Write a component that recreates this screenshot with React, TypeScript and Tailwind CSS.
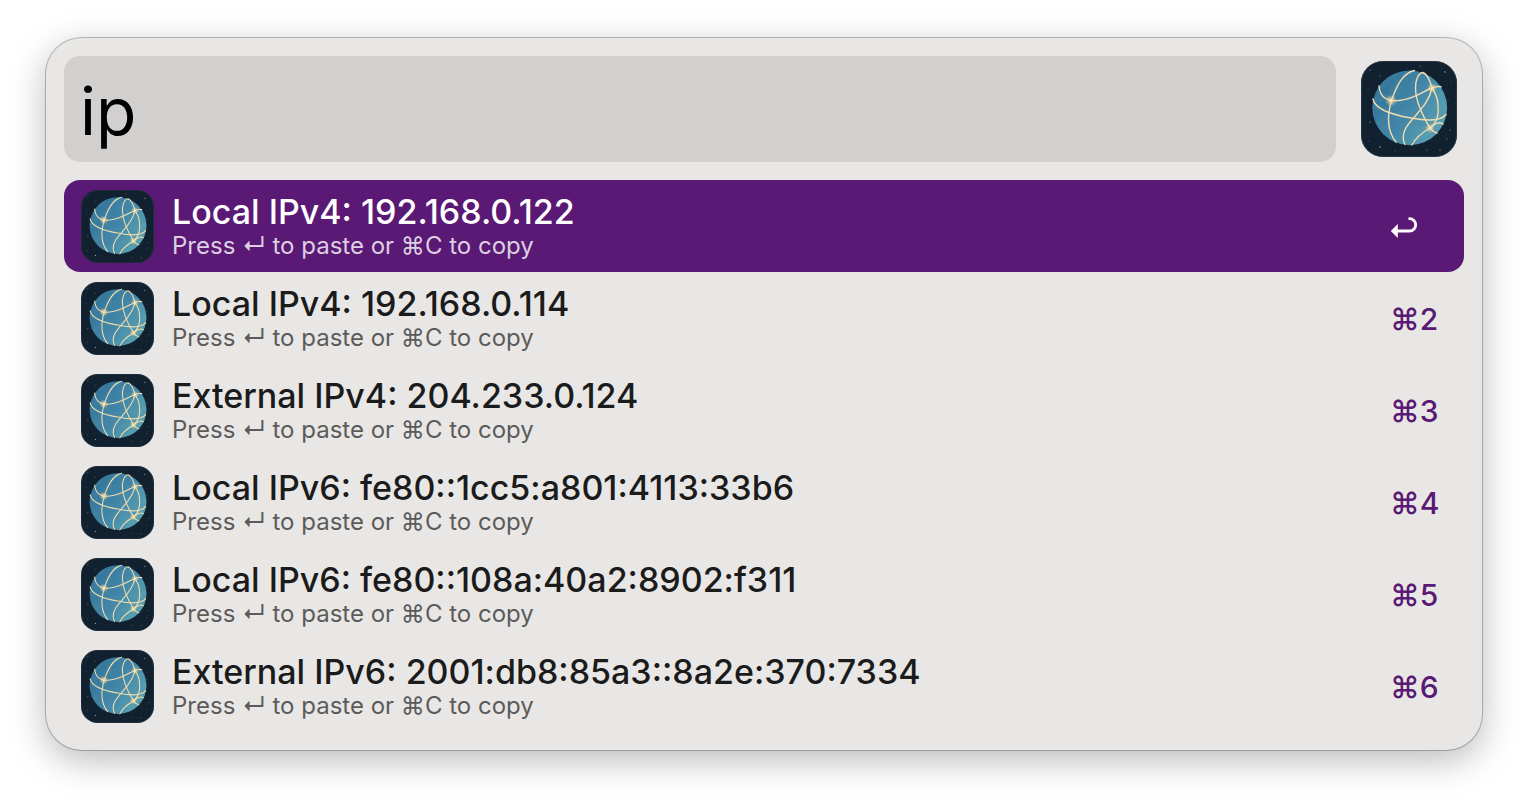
import { useState } from "react";

type Result = { title: string; shortcut: string };

const results: Result[] = [
  { title: "Local IPv4: 192.168.0.122", shortcut: "" },
  { title: "Local IPv4: 192.168.0.114", shortcut: "⌘2" },
  { title: "External IPv4: 204.233.0.124", shortcut: "⌘3" },
  { title: "Local IPv6: fe80::1cc5:a801:4113:33b6", shortcut: "⌘4" },
  { title: "Local IPv6: fe80::108a:40a2:8902:f311", shortcut: "⌘5" },
  { title: "External IPv6: 2001:db8:85a3::8a2e:370:7334", shortcut: "⌘6" },
];

const stars: [number, number, number][] = [
  [9, 9, 0.6], [19, 15, 0.5], [84, 11, 0.8], [59, 5, 0.5], [90, 21, 0.4], [7, 28, 0.4],
  [9, 61, 0.6], [19, 86, 0.8], [8, 80, 0.4], [66, 89, 0.5], [79, 89, 0.6], [86, 78, 0.5],
  [89, 69, 0.5], [87, 39, 0.4], [34, 90, 0.4],
];

// Night-sky tile with a globe wrapped in glowing orbits.
function GlobeIcon({ id, className }: { id: string; className: string }) {
  return (
    <svg viewBox="0 0 96 96" className={className} aria-hidden="true">
      <defs>
        <linearGradient id={`${id}-globe`} x1="0.1" y1="0.2" x2="0.95" y2="0.7">
          <stop offset="0" stopColor="#33759a" />
          <stop offset="0.5" stopColor="#4186a8" />
          <stop offset="1" stopColor="#5ba4b4" />
        </linearGradient>
        <radialGradient id={`${id}-glow`}>
          <stop offset="0" stopColor="#fff6cf" />
          <stop offset="0.3" stopColor="#f6dfa3" stopOpacity="0.75" />
          <stop offset="1" stopColor="#f0d596" stopOpacity="0" />
        </radialGradient>
        <filter id={`${id}-grain`} x="0" y="0" width="100%" height="100%">
          <feTurbulence type="fractalNoise" baseFrequency="0.12" numOctaves="3" seed="4" />
          <feColorMatrix values="0 0 0 0 0.08  0 0 0 0 0.25  0 0 0 0 0.38  2.4 0 0 0 -1" />
          <feComposite in2="SourceGraphic" operator="in" />
        </filter>
      </defs>
      <rect width="96" height="96" rx="22" fill="#12212f" />
      <rect x="0.5" y="0.5" width="95" height="95" rx="21.5" fill="none" stroke="#33404c" strokeOpacity="0.6" />
      {stars.map(([x, y, r]) => (
        <circle key={`${x}-${y}`} cx={x} cy={y} r={r} fill="#a9a28c" />
      ))}
      <circle cx="48.7" cy="46.8" r="37.4" fill={`url(#${id}-globe)`} />
      <circle cx="48.7" cy="46.8" r="37.4" fill="#000" filter={`url(#${id}-grain)`} opacity="0.45" />
      <g fill="none" stroke="#f0dcae" strokeWidth="1.4" strokeLinecap="round">
        <path d="M18 25C19 38 28 40.5 38 39.5C54 38 62 30 71 27Q76 25 80 25.8" />
        <path d="M53.5 9.5C42 12 36 24 31 38C26 54 26 70 35 81" />
        <path d="M12 38C14 48 32 54 50 57C66 60 80 60 85 53.5" />
        <path d="M71 27C68.5 18 66 13 62 11.5C57 12 54 20 54.5 28C55 43 63 57 69 67Q72 71 76 72" />
        <path d="M71 27C75 33 77 38 77 44C78 53 77 60 69 67" />
        <path d="M71 27C68 42 57 51 50 60C43 68 40 76 44 83.5" />
        <path d="M51 84C55 76 62 71 69 67C74 63 78 60 82 63" />
      </g>
      <circle cx="30" cy="39.5" r="6" fill={`url(#${id}-glow)`} />
      <circle cx="71" cy="27" r="5" fill={`url(#${id}-glow)`} />
      <circle cx="69" cy="67" r="5" fill={`url(#${id}-glow)`} />
    </svg>
  );
}

function ReturnIcon() {
  return (
    <svg viewBox="0 0 28 24" className="h-6 w-7" role="img" aria-label="Return">
      <path d="M7 16H19.5A6.2 6.2 0 0 0 19.5 3.6H18.5" fill="none" stroke="currentColor" strokeWidth="2.8" />
      <path d="M0.8 16L7.8 9V23Z" fill="currentColor" />
    </svg>
  );
}

export default function App() {
  const [query, setQuery] = useState("ip");
  const [selected, setSelected] = useState(0);

  return (
    <main className="min-h-screen bg-white px-[46px] py-[38px] font-['Inter','Noto_Sans',sans-serif]">
      <section className="rounded-[36px] bg-[#e8e7e5] p-[18px] shadow-[0_0_0_1px_rgba(0,0,0,0.24),0_10px_36px_rgba(0,0,0,0.28)]">
        <div className="flex items-center gap-[25px] pr-[7px]">
          <input
            type="text"
            aria-label="Search"
            value={query}
            onChange={(e) => setQuery(e.target.value)}
            className="h-[106px] min-w-0 flex-1 rounded-2xl bg-[#d1d0ce] px-4 pt-1 text-[66px] text-black outline-none"
          />
          <GlobeIcon id="main" className="size-24 shrink-0" />
        </div>
        <ul className="mt-[18px]">
          {results.map((r, i) => {
            const active = i === selected;
            return (
              <li key={r.title}>
                <button
                  type="button"
                  onClick={() => setSelected(i)}
                  className={`flex h-[92px] w-full items-center gap-[18px] rounded-2xl pl-[17px] text-left ${
                    active ? "bg-[#591974] text-white" : "text-[#1b1b1b]"
                  }`}
                >
                  <GlobeIcon id={`row${i}`} className="size-[73px] shrink-0" />
                  <span className="flex min-w-0 flex-1 flex-col">
                    <span className="text-[34px] leading-10 font-medium">{r.title}</span>
                    <span className={`text-[24px] leading-7 ${active ? "text-[#dccfe2]" : "text-[#5c5b5a]"}`}>
                      Press ↵ to paste or ⌘C to copy
                    </span>
                  </span>
                  <span className={`flex w-[74px] shrink-0 items-center pt-[2px] text-[30px] font-medium ${active ? "text-white" : "text-[#591974]"}`}>
                    {r.shortcut || <ReturnIcon />}
                  </span>
                </button>
              </li>
            );
          })}
        </ul>
      </section>
    </main>
  );
}
